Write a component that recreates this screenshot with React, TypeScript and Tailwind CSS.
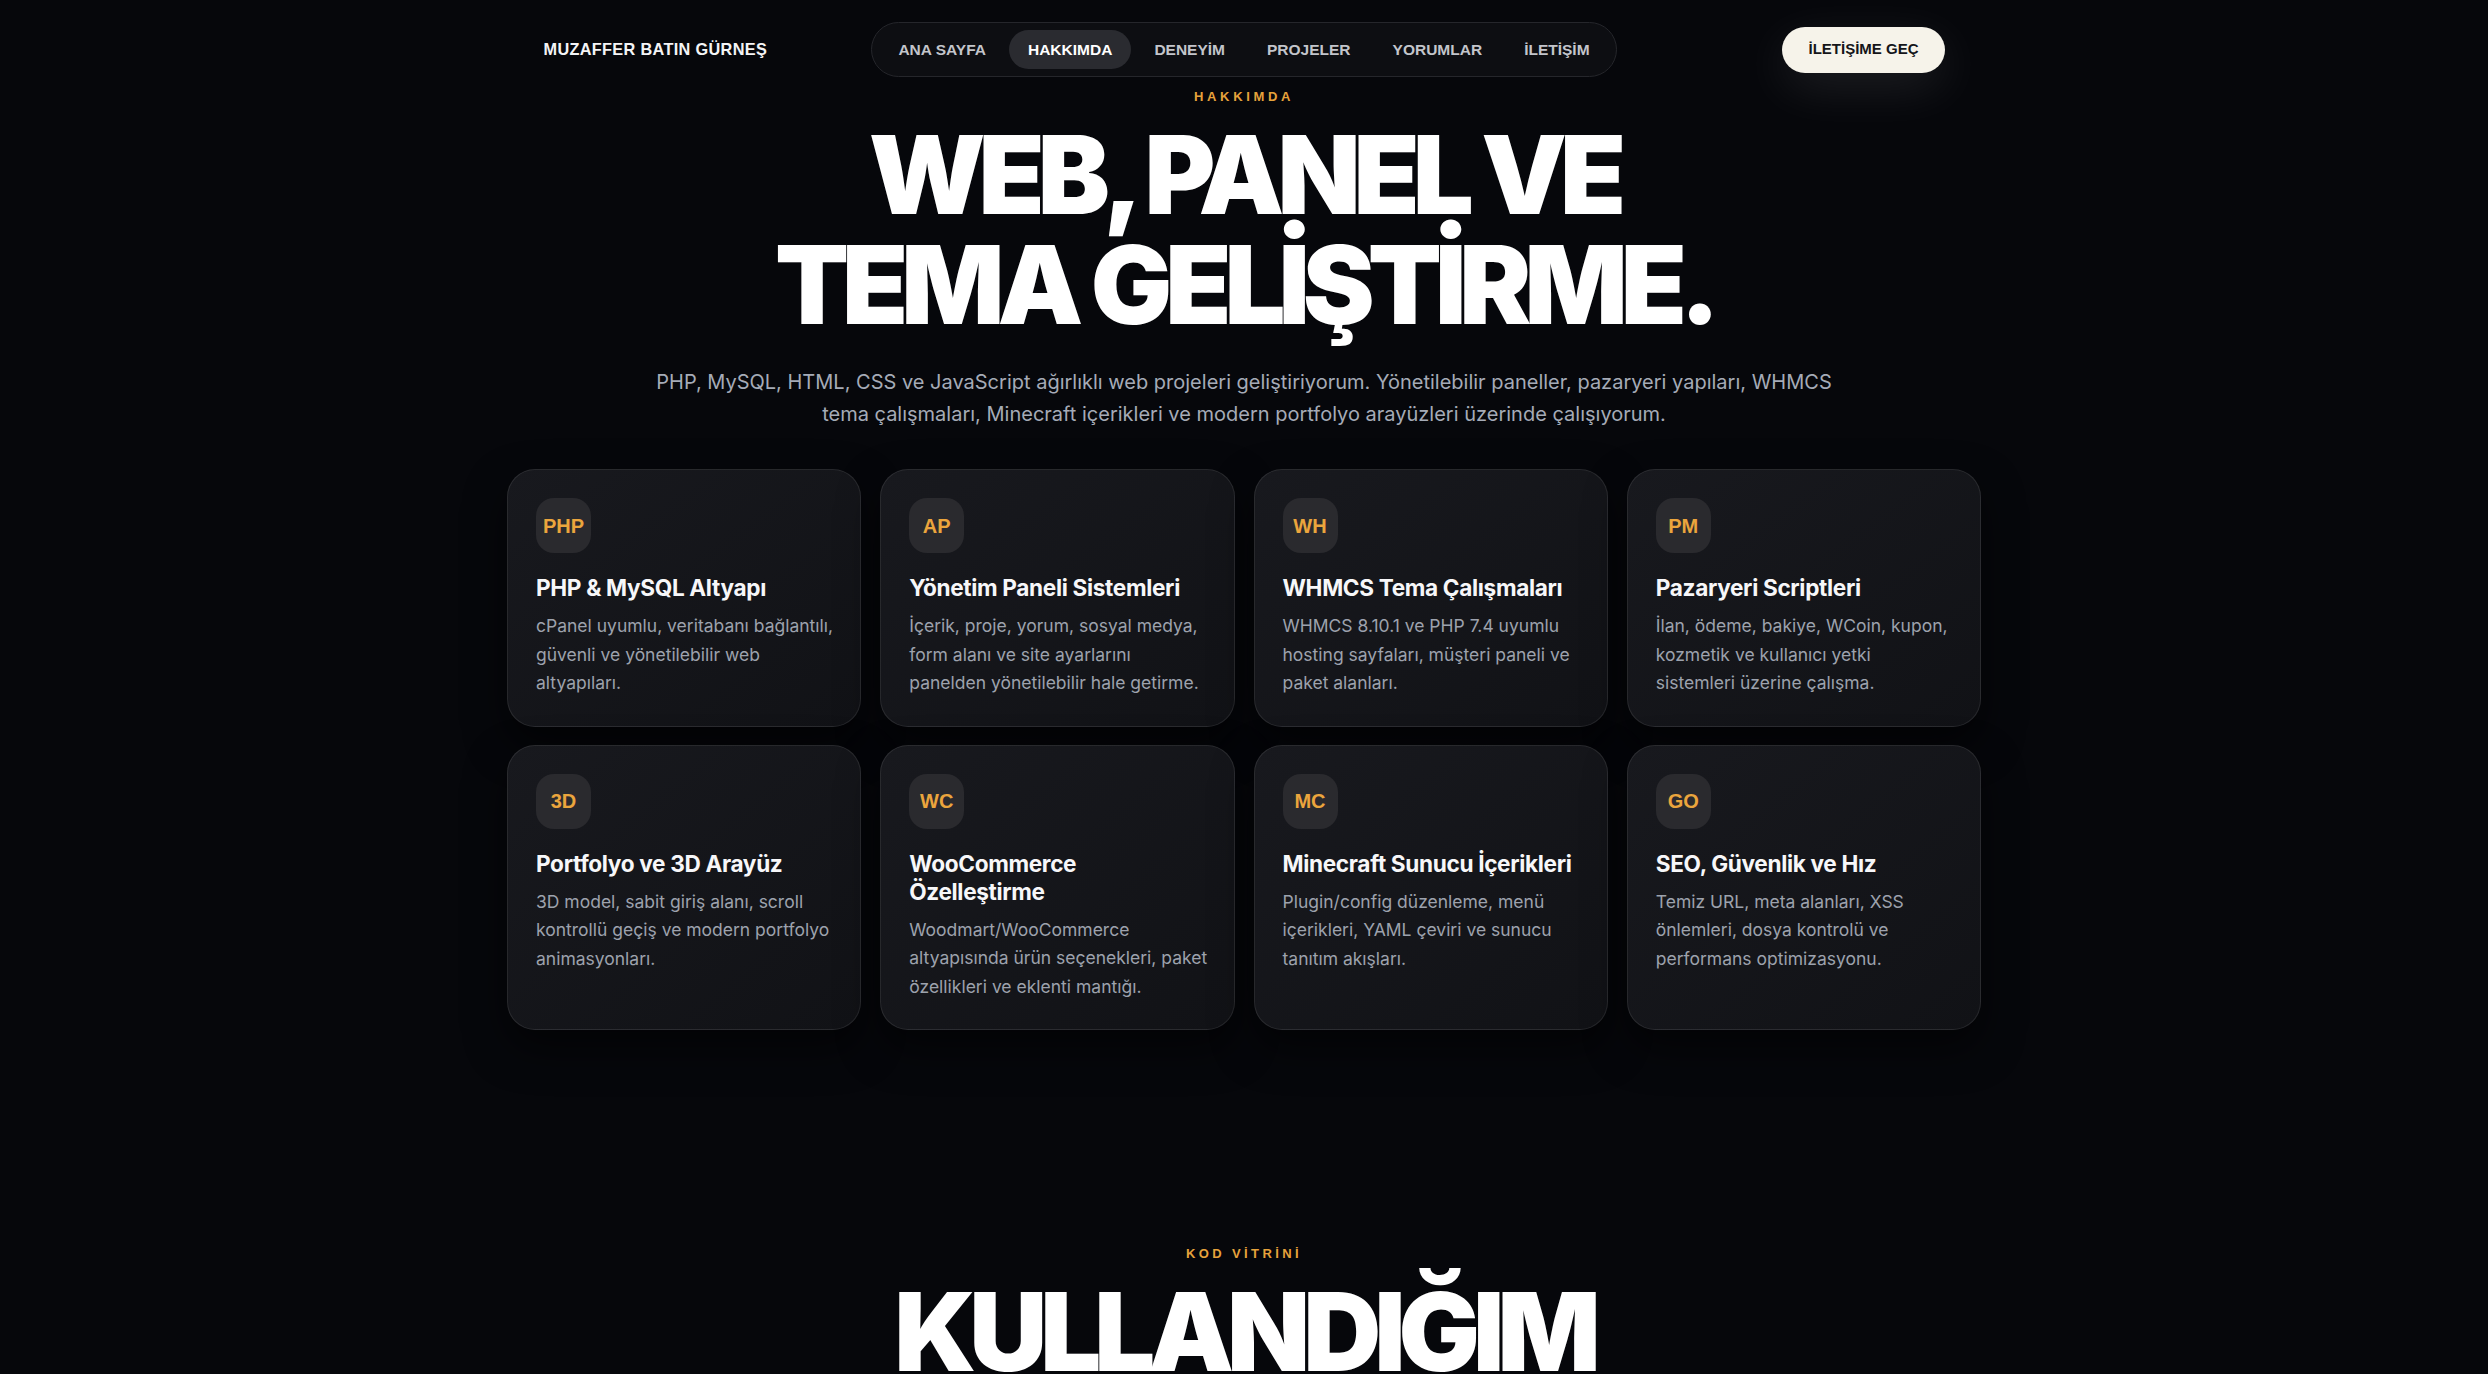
import React from "react";

const navItems = ["ANA SAYFA", "HAKKIMDA", "DENEYİM", "PROJELER", "YORUMLAR", "İLETİŞİM"];

const cards = [
  {
    badge: "PHP",
    title: "PHP & MySQL Altyapı",
    text: "cPanel uyumlu, veritabanı bağlantılı, güvenli ve yönetilebilir web altyapıları.",
  },
  {
    badge: "AP",
    title: "Yönetim Paneli Sistemleri",
    text: "İçerik, proje, yorum, sosyal medya, form alanı ve site ayarlarını panelden yönetilebilir hale getirme.",
  },
  {
    badge: "WH",
    title: "WHMCS Tema Çalışmaları",
    text: "WHMCS 8.10.1 ve PHP 7.4 uyumlu hosting sayfaları, müşteri paneli ve paket alanları.",
  },
  {
    badge: "PM",
    title: "Pazaryeri Scriptleri",
    text: "İlan, ödeme, bakiye, WCoin, kupon, kozmetik ve kullanıcı yetki sistemleri üzerine çalışma.",
  },
  {
    badge: "3D",
    title: "Portfolyo ve 3D Arayüz",
    text: "3D model, sabit giriş alanı, scroll kontrollü geçiş ve modern portfolyo animasyonları.",
  },
  {
    badge: "WC",
    title: "WooCommerce Özelleştirme",
    text: "Woodmart/WooCommerce altyapısında ürün seçenekleri, paket özellikleri ve eklenti mantığı.",
  },
  {
    badge: "MC",
    title: "Minecraft Sunucu İçerikleri",
    text: "Plugin/config düzenleme, menü içerikleri, YAML çeviri ve sunucu tanıtım akışları.",
  },
  {
    badge: "GO",
    title: "SEO, Güvenlik ve Hız",
    text: "Temiz URL, meta alanları, XSS önlemleri, dosya kontrolü ve performans optimizasyonu.",
  },
];

const SkillCard = ({ badge, title, text }: { badge: string; title: string; text: string }) => (
  <div className="rounded-[28px] border border-white/[0.09] bg-gradient-to-br from-[#18191e] to-[#111216] py-7 pl-7 pr-[26px] shadow-[0_18px_40px_rgba(0,0,0,0.55)]">
    <div className="flex h-[55px] w-[55px] items-center justify-center rounded-[18px] bg-[#2a2a2e] font-['Liberation_Sans',sans-serif] text-[20px] font-bold text-[#eba53d]">
      {badge}
    </div>
    <h3 className="mt-[21px] text-[22.6px] font-bold leading-[28px] tracking-[-0.015em] text-[#f7f7f9]">
      {title}
    </h3>
    <p className="mt-[10px] text-[17.5px] leading-[28.5px] text-[#9da2ad]">{text}</p>
  </div>
);

export default function App() {
  return (
    <div className="min-h-screen overflow-hidden bg-[#06070b] font-['Inter',sans-serif] text-white">
      <header className="mx-auto grid w-[1401px] grid-cols-[1fr_auto_1fr] items-center pt-[22px]">
        <div className="font-['Liberation_Sans',sans-serif] text-[16.3px] font-bold tracking-[0.02em] text-[#f4f4f6]">
          MUZAFFER BATIN GÜRNEŞ
        </div>
        <nav className="flex items-center gap-1 rounded-full border border-[#25262b] bg-[#0d0e12] p-[7px] font-['Liberation_Sans',sans-serif]">
          {navItems.map((item) => (
            <a
              key={item}
              className={
                item === "HAKKIMDA"
                  ? "rounded-full bg-[#2a2b30] px-[19px] py-[10px] text-[15.5px] font-bold leading-[19px] text-white"
                  : "rounded-full px-[19px] py-[10px] text-[15.5px] font-bold leading-[19px] text-[#c3c5cb]"
              }
            >
              {item}
            </a>
          ))}
        </nav>
        <div className="flex justify-end">
          <button className="h-[46px] rounded-full bg-[#f6f3ea] px-[26px] font-['Liberation_Sans',sans-serif] text-[15px] font-bold text-[#141519] shadow-[0_14px_50px_rgba(255,255,255,0.10)]">
            İLETİŞİME GEÇ
          </button>
        </div>
      </header>

      <section className="flex flex-col items-center pt-[10px]">
        <div className="font-['Liberation_Sans',sans-serif] text-[13px] font-bold leading-[20px] tracking-[0.28em] text-[#e6a23b]">
          HAKKIMDA
        </div>
        <h1 className="mt-[13px] text-center text-[108px] font-black leading-[110px] tracking-[-0.065em] text-white">
          WEB, PANEL VE
          <br />
          TEMA GELİŞTİRME.
        </h1>
        <p className="mt-[26px] max-w-[1200px] text-center text-[20px] leading-[32px] text-[#a5abb7]">
          PHP, MySQL, HTML, CSS ve JavaScript ağırlıklı web projeleri geliştiriyorum. Yönetilebilir
          paneller, pazaryeri yapıları, WHMCS tema çalışmaları, Minecraft içerikleri ve modern portfolyo
          arayüzleri üzerinde çalışıyorum.
        </p>
        <div className="mt-[39px] grid w-[1474px] grid-cols-4 gap-x-[19px] gap-y-[18px]">
          {cards.map((c) => (
            <SkillCard key={c.badge} {...c} />
          ))}
        </div>
      </section>

      <section className="mt-[214px] flex flex-col items-center">
        <div className="font-['Liberation_Sans',sans-serif] text-[13px] font-bold leading-[20px] tracking-[0.26em] text-[#e6a23b]">
          KOD VİTRİNİ
        </div>
        <h2 className="mt-[13px] text-center text-[108px] font-black leading-[110px] tracking-[-0.065em] text-white">
          KULLANDIĞIM
        </h2>
      </section>
    </div>
  );
}
